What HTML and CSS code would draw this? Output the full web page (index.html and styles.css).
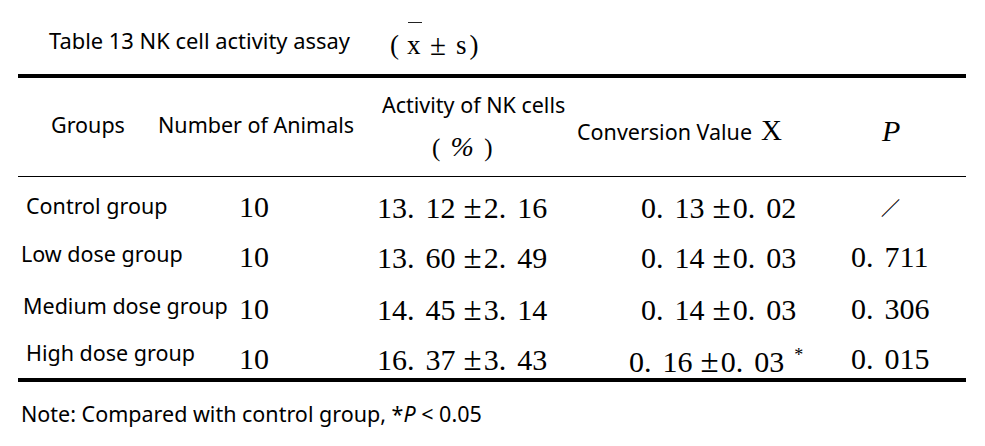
FILE: index.html
```html
<!DOCTYPE html>
<html lang="en">
<head>
<meta charset="utf-8">
<title>Table 13 NK cell activity assay</title>
<link rel="stylesheet" href="styles.css">
</head>
<body>
<div class="page">
  <div class="caption">
    <div class="title">Table 13 NK cell activity assay</div>
    <div class="math">
      <span class="paren">(</span>
      <span class="mean"><span class="bar"></span><span class="mx">x</span></span>
      <span class="pm">±</span>
      <span class="ms">s</span>
      <span class="paren close">)</span>
    </div>
  </div>
  <div class="table">
    <div class="rule thick"></div>
    <div class="head">
      <div class="h h-groups">Groups</div>
      <div class="h h-animals">Number of Animals</div>
      <div class="h h-activity">
        <div class="act-line">Activity of NK cells</div>
        <div class="pct">( <span class="pct-sign">%</span> )</div>
      </div>
      <div class="h h-conv"><span class="conv-text">Conversion Value</span><span class="bigx">X</span></div>
      <div class="h h-p">P</div>
    </div>
    <div class="rule thin"></div>
    <div class="rows">
      <div class="row r1">
        <div class="lbl">Control group</div>
        <div class="num c-n">10</div>
        <div class="num c-a">13. 12<span class="pmn">±</span>2. 16</div>
        <div class="num c-c">0. 13<span class="pmn">±</span>0. 02</div>
        <div class="num c-p slash">／</div>
      </div>
      <div class="row r2">
        <div class="lbl">Low dose group</div>
        <div class="num c-n">10</div>
        <div class="num c-a">13. 60<span class="pmn">±</span>2. 49</div>
        <div class="num c-c">0. 14<span class="pmn">±</span>0. 03</div>
        <div class="num c-p">0. 711</div>
      </div>
      <div class="row r3">
        <div class="lbl">Medium dose group</div>
        <div class="num c-n">10</div>
        <div class="num c-a">14. 45<span class="pmn">±</span>3. 14</div>
        <div class="num c-c">0. 14<span class="pmn">±</span>0. 03</div>
        <div class="num c-p">0. 306</div>
      </div>
      <div class="row r4">
        <div class="lbl">High dose group</div>
        <div class="num c-n">10</div>
        <div class="num c-a">16. 37<span class="pmn">±</span>3. 43</div>
        <div class="num c-c">0. 16<span class="pmn">±</span>0. 03<span class="star">*</span></div>
        <div class="num c-p">0. 015</div>
      </div>
    </div>
    <div class="rule thick"></div>
  </div>
  <p class="note">Note: Compared with control group, *<i>P</i> &lt; 0.05</p>
</div>
</body>
</html>
```

FILE: styles.css
```css
html, body {
  margin: 0;
  padding: 0;
  background: #fff;
}

.page {
  width: 985px;
  height: 446px;
  color: #000;
  font-family: "Noto Sans", "Open Sans", sans-serif;
  font-size: 21.5px;
  line-height: 22px;
}

/* caption */
.caption {
  height: 74px;
  padding-left: 49px;
  display: grid;
  grid-template-columns: 341px auto;
  align-items: start;
  box-sizing: border-box;
}

.title {
  padding-top: 30px;
  font-size: 21.9px;
}

.math {
  padding-top: 22px;
  display: flex;
  align-items: flex-end;
  font-family: "Liberation Serif", "Times New Roman", serif;
  font-size: 27px;
  line-height: 27px;
}

.mean {
  display: flex;
  flex-direction: column;
  align-items: flex-start;
  margin-left: 8px;
}

.bar {
  width: 14px;
  height: 1px;
  margin-left: 1px;
  margin-bottom: 9px;
  background: #222;
}

.pm {
  margin-left: 8px;
  font-size: 29px;
}

.ms {
  margin-left: 10px;
}

.close {
  margin-left: 3px;
}

/* table */
.table {
  margin: 0 19px 0 18px;
}

.rule {
  background: #000;
}

.rule.thick {
  height: 4px;
}

.rule.thin {
  height: 1px;
}

.head {
  height: 98px;
  display: flex;
  align-items: flex-start;
}

.h-groups {
  width: 107px;
  padding-left: 33px;
  padding-top: 36px;
}

.h-animals {
  width: 224px;
  padding-top: 36px;
}

.h-activity {
  width: 195px;
  padding-top: 16px;
}

.pct {
  margin-top: 18px;
  padding-left: 50px;
  font-family: "Liberation Serif", "Times New Roman", serif;
  font-size: 25px;
  line-height: 25px;
  word-spacing: 4px;
}

.pct-sign {
  font-style: italic;
  font-size: 28px;
}

.h-conv {
  width: 302px;
  padding-top: 38px;
  display: flex;
  align-items: baseline;
  gap: 9px;
}

.bigx {
  font-family: "Liberation Serif", "Times New Roman", serif;
  font-size: 29px;
  line-height: 29px;
}

.h-p {
  padding-top: 38px;
  padding-left: 3px;
  font-family: "Liberation Serif", "Times New Roman", serif;
  font-style: italic;
  font-size: 30px;
  line-height: 30px;
}

/* data rows */
.row {
  display: grid;
  grid-template-columns: 218px 138px 198px 270px 106px;
  align-items: start;
}

.r1 { height: 50px; }
.r2 { height: 52px; }
.r3 { height: 50px; }
.r4 { height: 49px; }

.lbl {
  white-space: nowrap;
}

.r1 .lbl { padding: 18px 0 0 8px; }
.r2 .lbl { padding: 16px 0 0 3px; }
.r3 .lbl { padding: 16px 0 0 5px; }
.r4 .lbl { padding: 13px 0 0 8px; }

.num {
  font-family: "Liberation Serif", "Times New Roman", serif;
  font-size: 30px;
  line-height: 30px;
  padding-top: 15px;
  word-spacing: 3.5px;
  white-space: nowrap;
}

.pmn {
  font-size: 33px;
  line-height: 30px;
  margin-left: 8px;
  margin-right: 2px;
}

.c-n { padding-left: 3px; }
.c-a { padding-left: 3px; }
.c-c { padding-left: 69px; }
.r4 .c-c { padding-left: 57px; padding-top: 17px; }
.c-p { padding-left: 9px; }

.slash {
  padding-left: 39px;
  font-family: "Noto Sans CJK SC", "Liberation Serif", serif;
  font-size: 19px;
  font-weight: 700;
  line-height: 19px;
  padding-top: 21px;
}

.star {
  font-size: 18px;
  line-height: 18px;
  vertical-align: top;
  margin-left: 10px;
}

/* note */
.note {
  margin: 21px 0 0 21px;
}

.note i {
  font-style: italic;
}
```
